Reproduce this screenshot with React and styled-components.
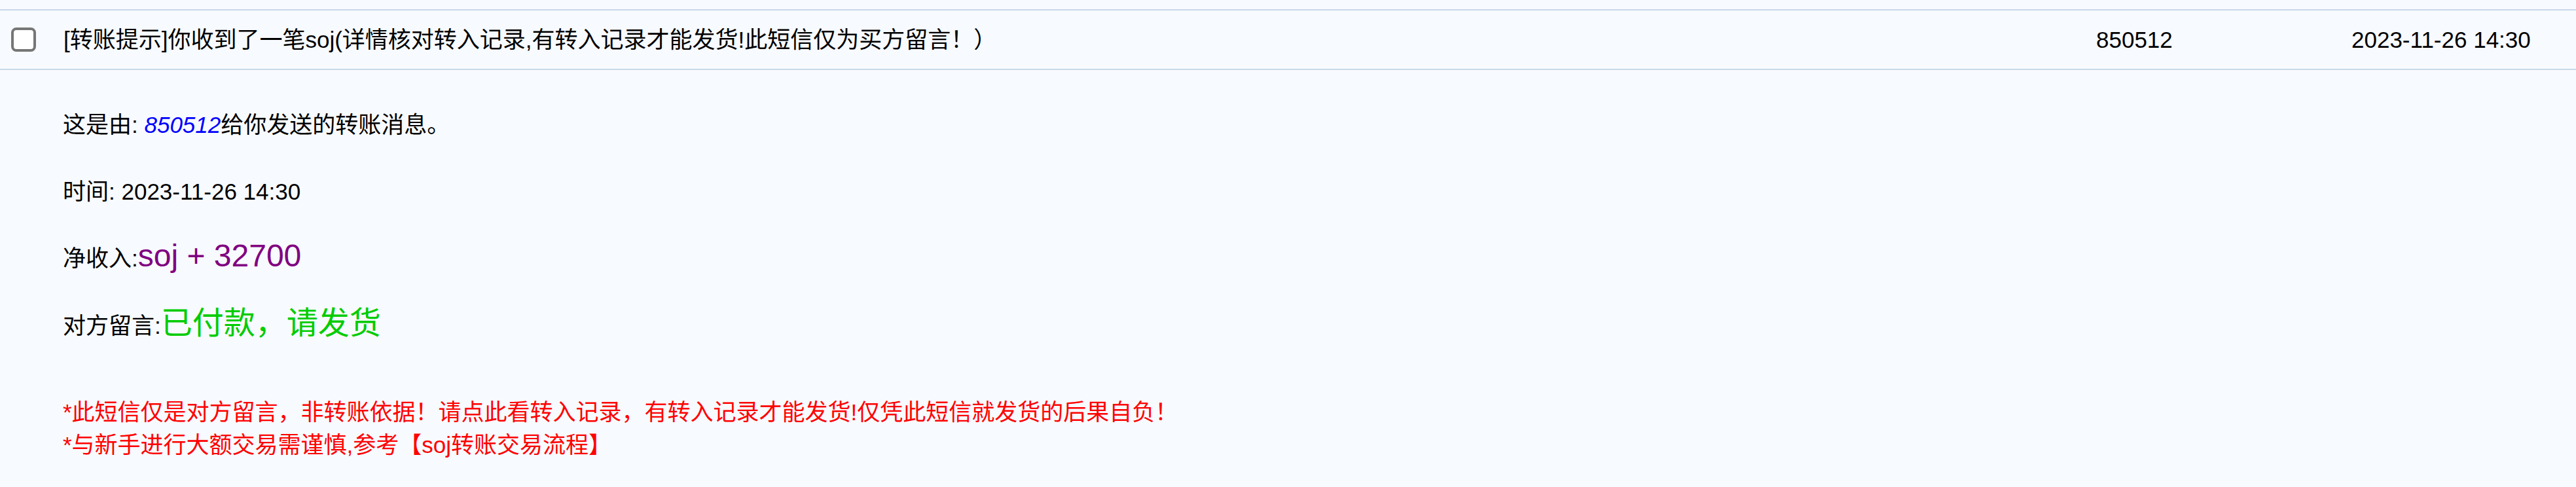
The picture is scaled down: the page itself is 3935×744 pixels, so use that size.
import React from "react";
import styled, { createGlobalStyle } from "styled-components";

const GlobalStyle = createGlobalStyle`
  html, body {
    margin: 0;
    padding: 0;
    background: #f7faff;
  }
  body {
    font-family: "Liberation Sans", "Noto Sans CJK SC", Arial, sans-serif;
    font-size: 35px;
    color: #000;
  }
`;

const Page = styled.div`
  width: 3935px;
  height: 744px;
  overflow: hidden;
  background: #f7faff;
  padding-top: 14px;
  box-sizing: border-box;
`;

const HeaderRow = styled.div`
  display: grid;
  grid-template-columns: 97px 1fr 390px 343px;
  align-items: center;
  height: 89px;
  border-top: 2px solid #c9d8e6;
  border-bottom: 2px solid #c9d8e6;
  box-sizing: content-box;
`;

const CheckCell = styled.div`
  display: flex;
  align-items: center;
  padding-left: 17px;
`;

const Check = styled.input.attrs({ type: "checkbox" })`
  appearance: none;
  -webkit-appearance: none;
  margin: 0;
  width: 38px;
  height: 37px;
  border: 4px solid #767676;
  border-radius: 8px;
  background: #fff;
  box-sizing: border-box;
`;

const Cell = styled.div`
  white-space: nowrap;
  line-height: 40px;
`;

const Body = styled.div`
  padding: 59px 0 0 96px;
`;

const Line = styled.div`
  margin-top: ${(p) => p.$gap || 0}px;
  line-height: 50px;
  height: 50px;
  white-space: nowrap;
  color: ${(p) => p.$color || "#000"};
`;

const Sender = styled.i`
  color: #0000ff;
`;

const Big = styled.span`
  font-size: 48px;
  line-height: 50px;
  color: ${(p) => p.$color};
`;

export default function App() {
  return (
    <>
      <GlobalStyle />
      <Page>
        <HeaderRow>
          <CheckCell>
            <Check />
          </CheckCell>
          <Cell>
            [转账提示]你收到了一笔soj(详情核对转入记录,有转入记录才能发货!此短信仅为买方留言！）
          </Cell>
          <Cell>850512</Cell>
          <Cell>2023-11-26 14:30</Cell>
        </HeaderRow>
        <Body>
          <Line>
            这是由: <Sender>850512</Sender>给你发送的转账消息。
          </Line>
          <Line $gap={52}>时间: 2023-11-26 14:30</Line>
          <Line $gap={48}>
            净收入:<Big $color="#800080">soj + 32700</Big>
          </Line>
          <Line $gap={53}>
            对方留言:<Big $color="#00cc00">已付款，请发货</Big>
          </Line>
          <Line $gap={86} $color="#ff0000">
            *此短信仅是对方留言，非转账依据！请点此看转入记录，有转入记录才能发货!仅凭此短信就发货的后果自负！
          </Line>
          <Line $color="#ff0000">
            *与新手进行大额交易需谨慎,参考【soj转账交易流程】
          </Line>
        </Body>
      </Page>
    </>
  );
}
